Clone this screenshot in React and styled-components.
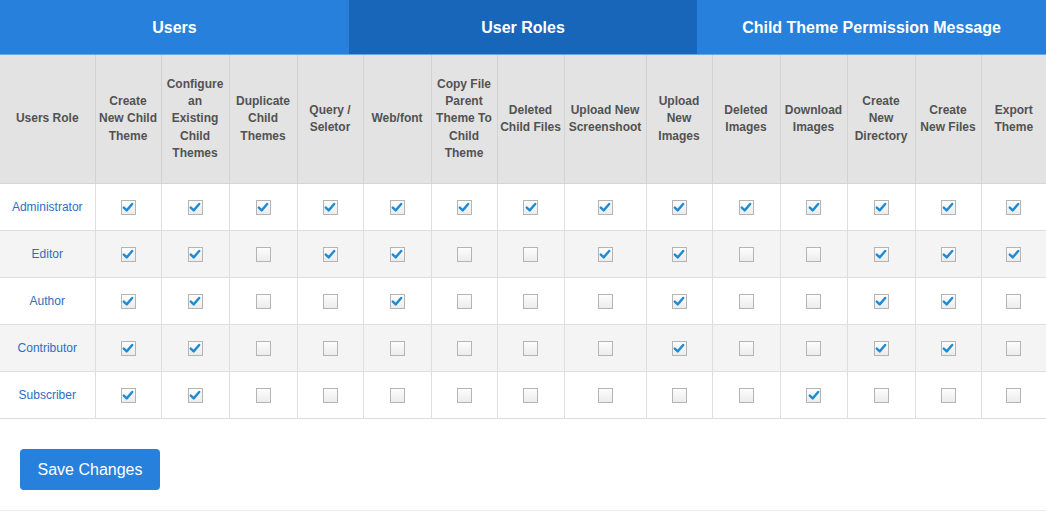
import styled, { createGlobalStyle } from "styled-components";

const GlobalStyle = createGlobalStyle`
  body {
    margin: 0;
    background: #fff;
    font-family: "Liberation Sans", Arial, sans-serif;
  }
`

const Page = styled.div`
  width: 1046px;
  height: 516px;
  overflow: hidden;
`

const Tabs = styled.div`
  display: grid;
  grid-template-columns: 349px 348px 349px;
  height: 55px;
  background: #2680dc;
  border-bottom: 1px solid #6aa6e6;
  box-sizing: border-box;
`

const Tab = styled.div`
  display: flex;
  align-items: center;
  justify-content: center;
  padding-top: 1px;
  color: #fff;
  font-size: 16px;
  font-weight: 700;
  background: ${props => props.$active ? '#1866b9' : 'transparent'};
`

const Table = styled.table`
  width: 1046px;
  table-layout: fixed;
  border-collapse: collapse;
  font-size: 12px;
`

const HeadCell = styled.th`
  height: 128px;
  padding: 0;
  background: #e3e3e3;
  color: #525252;
  font-weight: 700;
  line-height: 17.3px;
  text-align: center;
  white-space: nowrap;
  border-left: 1px solid #d2d2d2;
  border-bottom: 1px solid #d6d6d6;

  &:first-child {
    border-left: none;
  }
`

const Row = styled.tr`
  background: ${props => props.$striped ? '#f4f4f4' : '#fff'};
`

const Cell = styled.td`
  height: 46px;
  padding: 0;
  text-align: center;
  vertical-align: middle;
  border-left: 1px solid #dedede;
  border-bottom: 1px solid #dedede;

  &:first-child {
    border-left: none;
  }
`

const RoleName = styled.span`
  color: #2d6ec2;
  font-size: 12px;
`

const Box = styled.span`
  display: inline-flex;
  align-items: center;
  justify-content: center;
  width: 15px;
  height: 15px;
  box-sizing: border-box;
  border: 1px solid #b4b4b4;
  background: linear-gradient(#fdfdfd, #ececec);
  vertical-align: middle;
  margin-top: 1px;

  svg {
    display: block;
  }
`

const Footer = styled.div`
  padding: 30px 20px 20px;
  border-bottom: 1px solid #ececec;
`

const SaveButton = styled.button`
  width: 140px;
  height: 41px;
  border: none;
  border-radius: 4px;
  background: #2680dc;
  color: #fff;
  font-family: "Liberation Sans", Arial, sans-serif;
  font-size: 16px;
  cursor: pointer;
`

const columns = [
  [95, ['Users Role']],
  [66, ['Create', 'New Child', 'Theme']],
  [68, ['Configure', 'an', 'Existing', 'Child', 'Themes']],
  [68, ['Duplicate', 'Child', 'Themes']],
  [66, ['Query /', 'Seletor']],
  [68, ['Web/font']],
  [66, ['Copy File', 'Parent', 'Theme To', 'Child', 'Theme']],
  [67, ['Deleted', 'Child Files']],
  [82, ['Upload New', 'Screenshoot']],
  [66, ['Upload', 'New', 'Images']],
  [68, ['Deleted', 'Images']],
  [67, ['Download', 'Images']],
  [68, ['Create', 'New', 'Directory']],
  [66, ['Create', 'New Files']],
  [65, ['Export', 'Theme']],
]

const roles = [
  ['Administrator', '11111111111111'],
  ['Editor', '11011001100111'],
  ['Author', '11001000100110'],
  ['Contributor', '11000000100110'],
  ['Subscriber', '11000000001000'],
]

const Checkbox = ({checked}) => (
  <Box>
    {checked && (
      <svg width="12" height="11" viewBox="0 0 12 11">
        <path d="M1.8 5.6 L4.7 8.4 L10.2 2" fill="none" stroke="#1f8bd3" strokeWidth="2.4" strokeLinecap="round" strokeLinejoin="round"/>
      </svg>
    )}
  </Box>
)

export default function App() {
  return (
    <Page>
      <GlobalStyle/>
      <Tabs>
        <Tab>Users</Tab>
        <Tab $active>User Roles</Tab>
        <Tab>Child Theme Permission Message</Tab>
      </Tabs>
      <Table>
        <colgroup>
          {columns.map(([width], i) => <col key={i} style={{width}}/>)}
        </colgroup>
        <thead>
          <tr>
            {columns.map(([, lines], i) => (
              <HeadCell key={i}>
                {lines.map((line, j) => <div key={j}>{line}</div>)}
              </HeadCell>
            ))}
          </tr>
        </thead>
        <tbody>
          {roles.map(([name, flags], r) => (
            <Row key={name} $striped={r % 2 === 1}>
              <Cell><RoleName>{name}</RoleName></Cell>
              {flags.split('').map((flag, i) => (
                <Cell key={i}><Checkbox checked={flag === '1'}/></Cell>
              ))}
            </Row>
          ))}
        </tbody>
      </Table>
      <Footer>
        <SaveButton>Save Changes</SaveButton>
      </Footer>
    </Page>
  )
}
